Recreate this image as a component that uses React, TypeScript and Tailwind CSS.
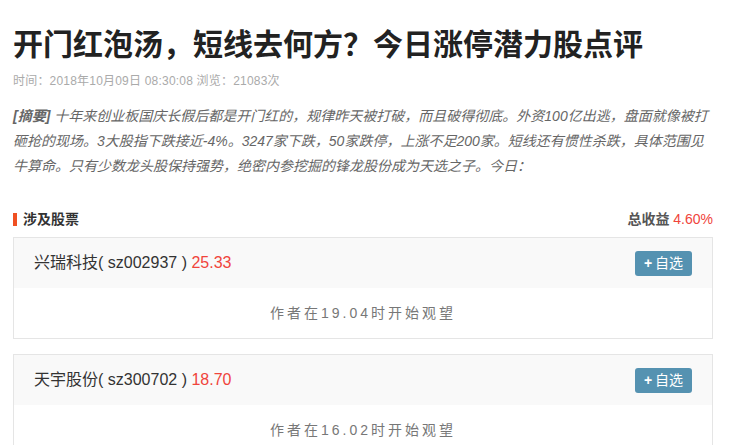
import React from "react";

const font = { fontFamily: '"Liberation Sans", "Noto Sans CJK SC", sans-serif' };

function StockCard({ name, code, price, note }: { name: string; code: string; price: string; note: string }) {
  return (
    <div className="border border-[#e5e5e5]">
      <div className="flex h-[50px] items-center justify-between bg-[#f9f9f9] pl-[20px] pr-[20px]">
        <div className="text-[16px] text-[#333]">
          {name}( {code} ) <span className="text-[#f0443c]">{price}</span>
        </div>
        <div className="flex h-[25px] w-[57px] items-center justify-center rounded-[3px] bg-[#5592b1] text-[14px] text-white">
          <span className="mr-[3px] font-bold">+</span>自选
        </div>
      </div>
      <div className="flex h-[50px] items-center justify-center text-[14px] tracking-[3px] text-[#777]">
        {note}
      </div>
    </div>
  );
}

export default function App() {
  return (
    <div className="min-h-[445px] w-[752px] bg-white" style={font}>
      <div className="w-[726px] pl-[13px]">
        <h1 className="pt-[26px] text-[30px] font-bold leading-[38px] text-[#222]">
          开门红泡汤，短线去何方？今日涨停潜力股点评
        </h1>
        <div className="mt-[9px] text-[12px] leading-[16px] tracking-[0.2px] text-[#aaa]">
          时间：2018年10月09日 08:30:08 浏览：21083次
        </div>
        <p className="mt-[15px] pr-[14px] text-[14px] italic leading-[25px] text-[#666]">
          <span className="mr-[4px] font-bold">[摘要]</span>十年来创业板国庆长假后都是开门红的，规律昨天被打破，而且破得彻底。外资100亿出逃，盘面就像被打砸抢的现场。3大股指下跌接近-4%。3247家下跌，50家跌停，上涨不足200家。短线还有惯性杀跌，具体范围见牛算命。只有少数龙头股保持强势，绝密内参挖掘的锋龙股份成为天选之子。今日：
        </p>
        <div className="mt-[30px] flex w-[700px] items-center justify-between">
          <div className="flex items-center">
            <div className="h-[13px] w-[4px] bg-[#f05022]" />
            <span className="ml-[6px] text-[14px] font-bold text-[#333]">涉及股票</span>
          </div>
          <div className="text-[14px]">
            <span className="font-bold text-[#555]">总收益</span> <span className="text-[#f0443c]">4.60%</span>
          </div>
        </div>
        <div className="mt-[7px] flex w-[700px] flex-col gap-[15px]">
          <StockCard name="兴瑞科技" code="sz002937" price="25.33" note="作者在19.04时开始观望" />
          <StockCard name="天宇股份" code="sz300702" price="18.70" note="作者在16.02时开始观望" />
        </div>
      </div>
    </div>
  );
}
